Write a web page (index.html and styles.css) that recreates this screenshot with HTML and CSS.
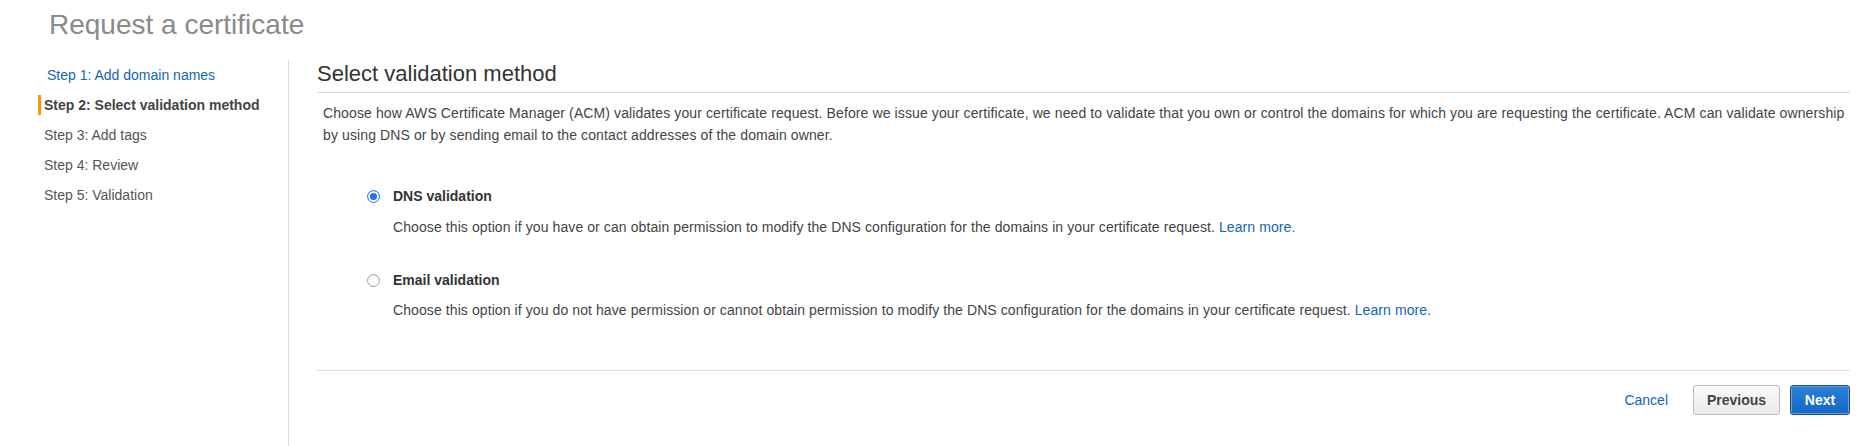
FILE: index.html
```html
<!DOCTYPE html>
<html lang="en">
<head>
<meta charset="utf-8">
<title>Request a certificate</title>
<link rel="stylesheet" href="styles.css">
</head>
<body>
<h1 class="page-title">Request a certificate</h1>
<div class="layout">
  <nav class="steps">
    <div class="step"><a class="step-link" href="#">Step 1: Add domain names</a></div>
    <div class="step step-active"><span>Step 2: Select validation method</span></div>
    <div class="step"><span>Step 3: Add tags</span></div>
    <div class="step"><span>Step 4: Review</span></div>
    <div class="step"><span>Step 5: Validation</span></div>
  </nav>
  <main class="content">
    <h2 class="section-title">Select validation method</h2>
    <p class="intro">Choose how AWS Certificate Manager (ACM) validates your certificate request. Before we issue your certificate, we need to validate that you own or control the domains for which you are requesting the certificate. ACM can validate ownership by using DNS or by sending email to the contact addresses of the domain owner.</p>
    <div class="options">
      <div class="option">
        <span class="radio radio-checked"></span>
        <div class="option-body">
          <div class="option-label">DNS validation</div>
          <div class="option-desc">Choose this option if you have or can obtain permission to modify the DNS configuration for the domains in your certificate request. <a href="#" class="link">Learn more.</a></div>
        </div>
      </div>
      <div class="option option-second">
        <span class="radio"></span>
        <div class="option-body">
          <div class="option-label">Email validation</div>
          <div class="option-desc">Choose this option if you do not have permission or cannot obtain permission to modify the DNS configuration for the domains in your certificate request. <a href="#" class="link">Learn more.</a></div>
        </div>
      </div>
    </div>
    <div class="actions">
      <a href="#" class="link cancel">Cancel</a>
      <button class="btn btn-secondary">Previous</button>
      <button class="btn btn-primary">Next</button>
    </div>
  </main>
</div>
</body>
</html>
```
FILE: styles.css
```css
* { box-sizing: border-box; }
html, body { margin: 0; padding: 0; background: #fff; }
body {
  font-family: "Liberation Sans", Arial, Helvetica, sans-serif;
  font-size: 14px;
  color: #444;
}
.page-title {
  margin: 0;
  padding: 9px 0 0 49px;
  height: 60px;
  font-size: 28px;
  line-height: 32px;
  font-weight: normal;
  color: #8a8a8a;
}
.layout {
  display: flex;
  min-height: 386px;
}
.steps {
  width: 289px;
  flex: none;
  border-right: 1px solid #dadada;
}
.step {
  display: flex;
  align-items: center;
  height: 30px;
  margin-left: 38px;
  gap: 3px;
  color: #555;
  line-height: 20px;
}
.step::before {
  content: "";
  width: 3px;
  height: 20px;
  background: transparent;
  flex: none;
}
.step-active { font-weight: bold; color: #444; }
.step-active::before { background: #ff9900; }
.step-link {
  color: #1166bb;
  text-decoration: none;
  padding-left: 3px;
}
.content {
  flex: 1;
  padding: 0 20px 0 28px;
}
.section-title {
  margin: 0;
  font-size: 22px;
  line-height: 28px;
  font-weight: normal;
  color: #333;
  padding-bottom: 4px;
  border-bottom: 1px solid #d9d9d9;
}
.intro {
  margin: 9px 0 0 6px;
  line-height: 22px;
  letter-spacing: 0.11px;
  color: #444;
}
.options {
  margin: 39px 0 0 50px;
}
.option {
  display: flex;
  align-items: flex-start;
}
.option-second { margin-top: 31px; }
.radio {
  flex: none;
  width: 13px;
  height: 13px;
  margin: 5px 13px 0 0;
  border-radius: 50%;
  border: 1px solid #a0a0a0;
  background: #fff;
  box-shadow: inset 0 1px 1px rgba(0,0,0,0.08);
}
.radio-checked {
  border: 1px solid #3b86f7;
  background: #1f74f2;
  box-shadow: inset 0 0 0 2px #fff;
}
.option-body { flex: 1; }
.option-label {
  font-weight: bold;
  color: #333;
  line-height: 22px;
}
.option-desc {
  margin-top: 9px;
  line-height: 22px;
  letter-spacing: 0.09px;
  color: #444;
}
.option-second .option-desc { margin-top: 8px; }
.link {
  color: #1166bb;
  text-decoration: none;
}
.actions {
  margin-top: 49px;
  border-top: 1px solid #dcdcdc;
  padding-top: 14px;
  display: flex;
  justify-content: flex-end;
  align-items: center;
}
.cancel {
  margin-right: 25px;
  line-height: 30px;
}
.btn {
  font-family: "Liberation Sans", Arial, Helvetica, sans-serif;
  font-size: 14px;
  font-weight: bold;
  height: 30px;
  border-radius: 3px;
  padding: 0;
  cursor: pointer;
}
.btn-secondary {
  width: 87px;
  color: #444;
  border: 1px solid #bcbcbc;
  background: linear-gradient(#fafafa, #e9e9e9);
}
.btn-primary {
  width: 60px;
  margin-left: 10px;
  color: #fff;
  border: 1px solid #1d4a80;
  background: linear-gradient(#2b7fd8, #1467c4);
  box-shadow: inset 0 0 0 1px #5aa2ea;
}
```
